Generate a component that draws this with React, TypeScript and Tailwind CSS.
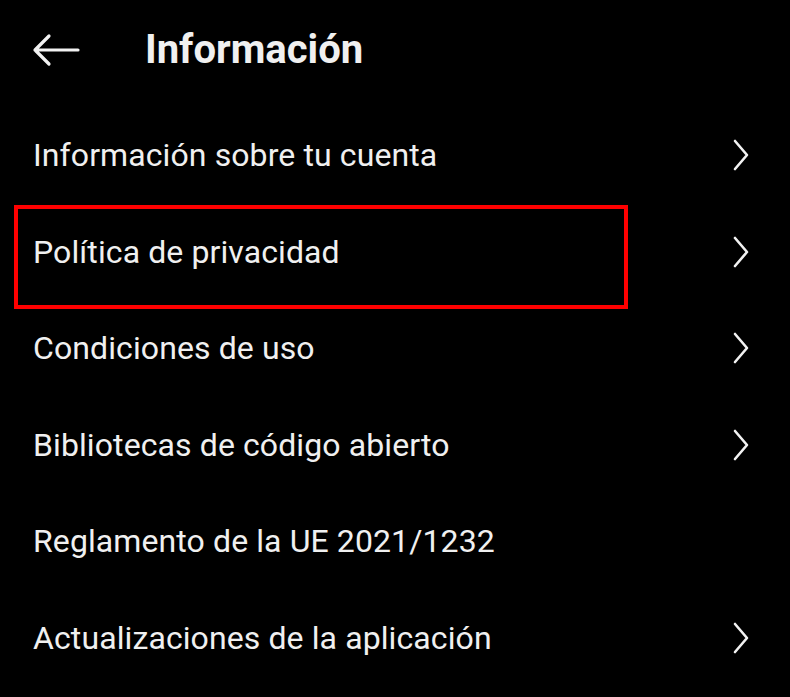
import React from "react";

const rows = [
  { label: "Información sobre tu cuenta", chevron: true },
  { label: "Política de privacidad", chevron: true, highlight: true },
  { label: "Condiciones de uso", chevron: true },
  { label: "Bibliotecas de código abierto", chevron: true },
  { label: "Reglamento de la UE 2021/1232", chevron: false },
  { label: "Actualizaciones de la aplicación", chevron: true },
];

function Chevron() {
  return (
    <svg width="18" height="32" viewBox="0 0 18 32" fill="none">
      <path d="M3 2 L15 16 L3 30" stroke="#f2f2f2" strokeWidth="2.6" strokeLinecap="round" strokeLinejoin="round" />
    </svg>
  );
}

function BackArrow() {
  return (
    <svg width="50" height="34" viewBox="0 0 50 34" fill="none">
      <path d="M47 17 H4 M18 3 L4 17 L18 31" stroke="#f2f2f2" strokeWidth="3.2" strokeLinecap="round" strokeLinejoin="round" />
    </svg>
  );
}

export default function App() {
  return (
    <div className="w-[790px] h-[697px] bg-black text-[#f0f0f0] overflow-hidden" style={{ fontFamily: "Roboto, 'Noto Sans', sans-serif" }}>
      <div className="h-[107px] flex items-center pl-[31px] pb-[8px]">
        <BackArrow />
        <h1 className="ml-[64px] text-[40px] font-bold leading-none">Información</h1>
      </div>
      {rows.map((r) => (
        <div key={r.label} className="relative h-[96.5px] flex items-center justify-between pl-[33px] pr-[40px]">
          <span className="text-[32px] leading-none tracking-[0.1px]">{r.label}</span>
          {r.chevron && <Chevron />}
          {r.highlight && (
            <div className="absolute left-[14px] top-[1px] w-[614px] h-[104px] border-[4px] border-[#ff0000] pointer-events-none" />
          )}
        </div>
      ))}
    </div>
  );
}
